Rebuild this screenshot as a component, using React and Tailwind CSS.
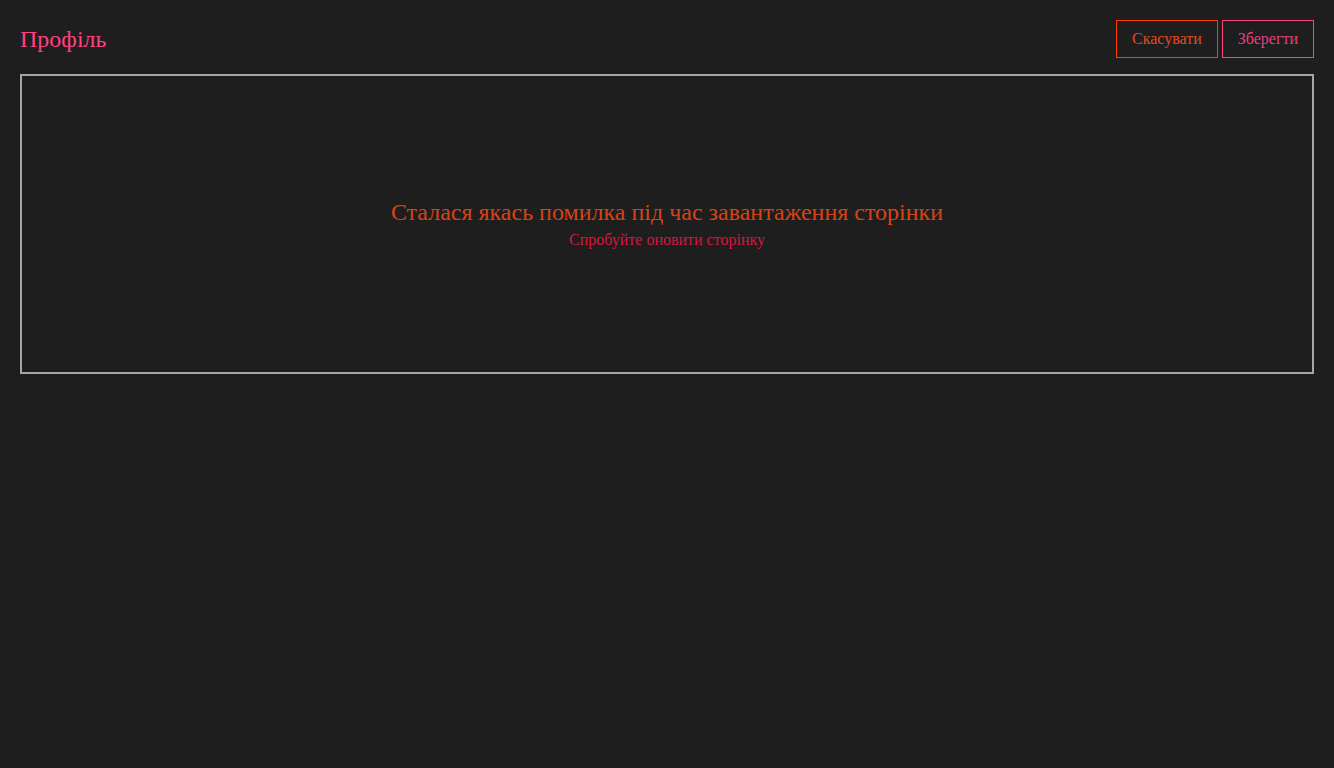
export default function App() {
  return (
    <div className="min-h-screen bg-[#1e1e1e] p-5 font-['Liberation_Serif',serif]">
      <div className="flex items-center justify-between h-[38px]">
        <h1 className="text-[24px] leading-7 text-[#ff4081]">Профіль</h1>
        <div className="flex gap-1">
          <button className="border border-[#ff3d00] text-[#e64a19] px-[15px] py-[9px] text-base leading-[18px]">
            Скасувати
          </button>
          <button className="border border-[#ff4081] text-[#e8407a] px-[15px] py-[9px] text-base leading-[18px]">
            Зберегти
          </button>
        </div>
      </div>
      <div className="mt-4 h-[300px] border-2 border-[#a6a6a6] flex flex-col items-center justify-center">
        <p className="text-[24px] leading-7 text-[#d84315]">
          Сталася якась помилка під час завантаження сторінки
        </p>
        <p className="mt-[5px] mb-[2px] text-base leading-[18px] text-[#dc143c]">Спробуйте оновити сторінку</p>
      </div>
    </div>
  );
}
